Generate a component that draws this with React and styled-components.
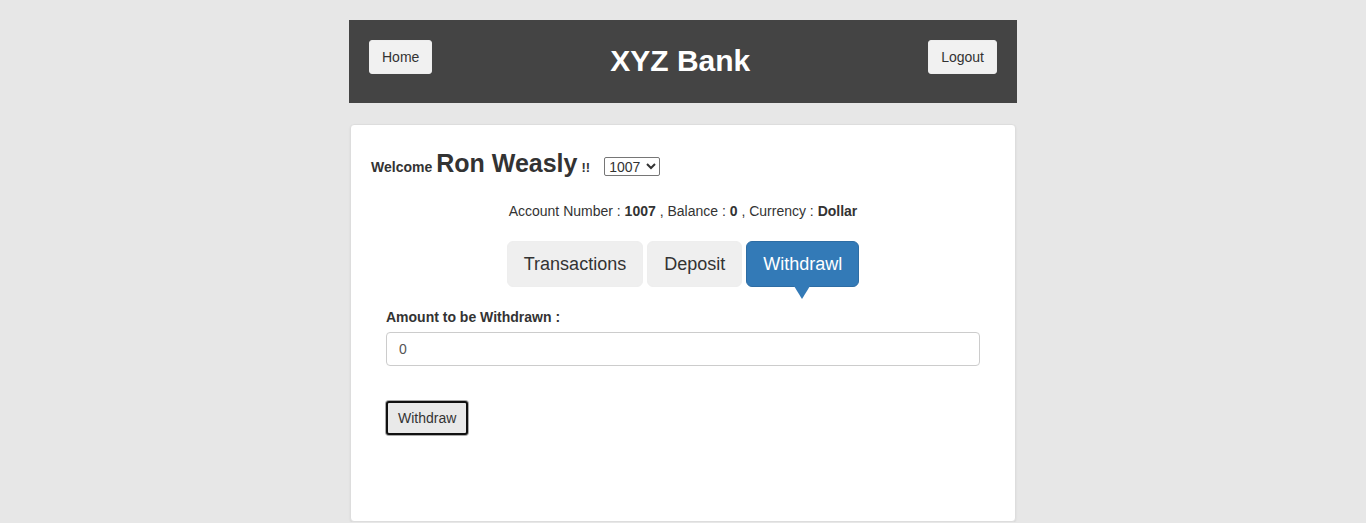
import React from "react";
import styled, { createGlobalStyle } from "styled-components";

const GlobalStyle = createGlobalStyle`
  body {
    margin: 0;
    background: #e7e7e7;
    font-family: "Liberation Sans", Arial, sans-serif;
    font-size: 14px;
    color: #333;
  }
`;

const Page = styled.div`
  width: 668px;
  margin: 0 auto;
  padding-top: 20px;
`;

const Header = styled.header`
  height: 83px;
  background: #444;
  display: flex;
  align-items: flex-start;
  justify-content: space-between;
  padding: 20px 20px 0;
  box-sizing: border-box;
`;

const HeadButton = styled.button`
  height: 34px;
  padding: 0 12px;
  border: 1px solid #eee;
  border-radius: 3px;
  background: #f1f1f1;
  font-family: inherit;
  font-size: 14px;
  color: #333;
`;

const Title = styled.h1`
  margin: 0;
  padding-top: 3px;
  font-size: 30px;
  font-weight: bold;
  color: #fff;
  line-height: 36px;
`;

const Card = styled.main`
  margin: 21px 1px 0;
  height: 398px;
  box-sizing: border-box;
  background: #fff;
  border: 1px solid #ddd;
  border-radius: 4px;
  box-shadow: 0 1px 2px rgba(0, 0, 0, 0.08);
  padding: 24px 20px 0;
`;

const WelcomeRow = styled.div`
  display: flex;
  align-items: baseline;
  font-weight: bold;
`;

const Small = styled.span`
  font-size: ${(p) => p.size || 14}px;
  margin-right: ${(p) => p.gap || 0}px;
`;

const Name = styled.span`
  font-size: 25px;
  margin: 0 4px;
`;

const AccountSelect = styled.select`
  font-family: "Liberation Sans", Arial, sans-serif;
  font-size: 14px;
  height: 19px;
  width: 56px;
  padding: 0;
  margin-left: 1px;
  border: 1px solid #767676;
  border-radius: 2px;
  background: #fff;
  color: #333;
`;

const AccountLine = styled.p`
  margin: 23px 0 0;
  text-align: center;
  font-size: 14px;
  line-height: 20px;
`;

const Tabs = styled.nav`
  display: flex;
  justify-content: center;
  gap: 4px;
  margin-top: 20px;
`;

const Tab = styled.button`
  position: relative;
  height: 46px;
  padding: 0 16px;
  border: 1px solid ${(p) => (p.active ? "#2e6da4" : "#eee")};
  border-radius: 6px;
  background: ${(p) => (p.active ? "#337ab7" : "#efefef")};
  color: ${(p) => (p.active ? "#fff" : "#333")};
  font-family: inherit;
  font-size: 18px;

  &::after {
    content: "";
    display: ${(p) => (p.active ? "block" : "none")};
    position: absolute;
    left: 50%;
    bottom: -13px;
    margin-left: -9px;
    border-left: 8px solid transparent;
    border-right: 8px solid transparent;
    border-top: 13px solid #337ab7;
  }
`;

const Form = styled.form`
  padding: 20px 15px 0;
`;

const Label = styled.label`
  display: block;
  font-weight: bold;
  font-size: 14px;
  line-height: 20px;
  margin-bottom: 5px;
`;

const Input = styled.input`
  display: block;
  width: 100%;
  height: 34px;
  box-sizing: border-box;
  padding: 6px 12px;
  border: 1px solid #ccc;
  border-radius: 4px;
  font-family: inherit;
  font-size: 14px;
  color: #555;
`;

const Submit = styled.button`
  margin-top: 35px;
  height: 34px;
  padding: 0 10px;
  border: 2px solid #111;
  border-radius: 3px;
  box-shadow: 0 0 0 1px #aaa;
  background: #e9e9e9;
  font-family: inherit;
  font-size: 14px;
  color: #333;
`;

export default function App() {
  return (
    <>
      <GlobalStyle />
      <Page>
        <Header>
          <HeadButton>Home</HeadButton>
          <Title>XYZ Bank</Title>
          <HeadButton>Logout</HeadButton>
        </Header>
        <Card>
          <WelcomeRow>
            <Small>Welcome</Small>
            <Name>Ron Weasly</Name>
            <Small size={13} gap={13}>!!</Small>
            <AccountSelect defaultValue="1007">
              <option>1007</option>
              <option>1008</option>
              <option>1009</option>
            </AccountSelect>
          </WelcomeRow>
          <AccountLine>
            Account Number : <strong>1007</strong> , Balance : <strong>0</strong> ,
            Currency : <strong>Dollar</strong>
          </AccountLine>
          <Tabs>
            <Tab>Transactions</Tab>
            <Tab>Deposit</Tab>
            <Tab active>Withdrawl</Tab>
          </Tabs>
          <Form onSubmit={(e) => e.preventDefault()}>
            <Label>Amount to be Withdrawn :</Label>
            <Input type="number" defaultValue="0" />
            <Submit type="submit">Withdraw</Submit>
          </Form>
        </Card>
      </Page>
    </>
  );
}
